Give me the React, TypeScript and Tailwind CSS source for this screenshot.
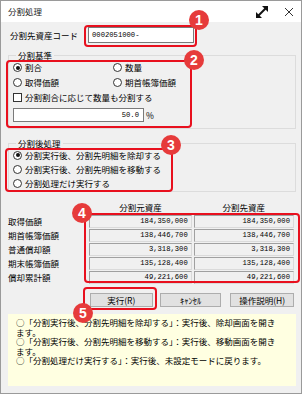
import React from 'react';

const jp = { fontFamily: '"Noto Sans CJK JP", "Noto Sans", sans-serif' };
const mono = { fontFamily: '"Liberation Mono", "Noto Sans CJK JP", monospace' };

function Radio({ checked, label }: { checked?: boolean; label: string }) {
  return (
    <div className="flex items-center gap-[3px]">
      <span className="flex h-[9px] w-[9px] items-center justify-center rounded-full border border-[#333] bg-white">
        {checked && <span className="h-[4px] w-[4px] rounded-full bg-[#111]" />}
      </span>
      <span>{label}</span>
    </div>
  );
}

function Badge({ n, className }: { n: string; className: string }) {
  return (
    <div
      className={`absolute flex h-[20px] w-[20px] items-center justify-center rounded-full bg-[#e63b3b] text-[14px] font-bold leading-none text-white ${className}`}
      style={{ fontFamily: '"Liberation Sans", Arial, sans-serif' }}
    >
      {n}
    </div>
  );
}

const rows = [
  { label: '取得価額', a: '184,350,000', b: '184,350,000' },
  { label: '期首帳簿価額', a: '138,446,700', b: '138,446,700' },
  { label: '普通償却額', a: '3,318,300', b: '3,318,300' },
  { label: '期末帳簿価額', a: '135,128,400', b: '135,128,400' },
  { label: '償却累計額', a: '49,221,600', b: '49,221,600' },
];

export default function App() {
  return (
    <div className="relative h-[396px] w-[304px] overflow-hidden bg-white text-[8.5px] text-black" style={jp}>
      <div className="h-[394px] w-[302px] border border-[#9a9a9a] bg-[#f0f0f0]">
        {/* title bar */}
        <div className="flex h-[21px] items-center bg-white pl-[7px] pr-[7px]">
          <span className="text-[#222]">分割処理</span>
          <svg className="ml-auto" width="14" height="14" viewBox="0 0 14 14">
            <line x1="3" y1="11" x2="11" y2="3" stroke="#111" strokeWidth="2" />
            <polygon points="13,1 13,7 7,1" fill="#111" />
            <polygon points="1,13 1,7 7,13" fill="#111" />
          </svg>
          <svg className="ml-[15px]" width="10" height="10" viewBox="0 0 10 10">
            <path d="M1 1 L9 9 M9 1 L1 9" stroke="#333" strokeWidth="1" />
          </svg>
        </div>

        <div className="px-[7px]">
          <div className="mt-[5px] flex items-center">
            <span className="w-[80px] pl-[2px]">分割先資産コード</span>
            <div className="flex h-[16px] w-[106px] items-center border border-[#7a7a7a] bg-white pl-[3px] text-[7.2px]" style={mono}>
              0002051000-
            </div>
          </div>

          <fieldset className="mt-[8px] w-[288px] border border-[#dcdcdc] px-[4px] pb-[6px] pt-[1px]">
            <legend className="ml-[3px] px-[2px] leading-[8px]">分割基準</legend>
            <div className="grid h-[15px] grid-cols-[100px_1fr] items-center">
              <Radio checked label="割合" />
              <Radio label="数量" />
            </div>
            <div className="grid h-[15px] grid-cols-[100px_1fr] items-center">
              <Radio label="取得価額" />
              <Radio label="期首帳簿価額" />
            </div>
            <div className="flex h-[15px] items-center gap-[3px]">
              <span className="h-[9px] w-[9px] border border-[#333] bg-white" />
              <span>分割割合に応じて数量も分割する</span>
            </div>
            <div className="mt-[3px] flex items-center gap-[2px]">
              <div className="flex h-[14px] w-[131px] items-center justify-end border border-[#7a7a7a] bg-white pr-[4px] text-[7.2px]" style={mono}>
                50.0
              </div>
              <span>%</span>
            </div>
          </fieldset>

          <fieldset className="mt-[10px] w-[288px] border border-[#dcdcdc] px-[4px] pb-[1px] pt-[1px]">
            <legend className="ml-[3px] px-[2px] leading-[8px]">分割後処理</legend>
            <div className="flex h-[14px] items-center"><Radio checked label="分割実行後、分割先明細を除却する" /></div>
            <div className="flex h-[14px] items-center"><Radio label="分割実行後、分割先明細を移動する" /></div>
            <div className="flex h-[14px] items-center"><Radio label="分割処理だけ実行する" /></div>
          </fieldset>

          <div className="mt-[9px] flex h-[12px] items-center">
            <span className="w-[82px]" />
            <span className="w-[103px] text-center">分割元資産</span>
            <span className="ml-[2px] w-[101px] text-center">分割先資産</span>
          </div>
          <div className="mt-[2px] flex flex-col gap-[1px]">
            {rows.map((r) => (
              <div key={r.label} className="flex h-[13px] items-center">
                <span className="w-[82px]">{r.label}</span>
                <div className="flex h-[13px] w-[103px] items-center justify-end border border-[#a0a0a0] border-b-[#dadada] border-r-[#dadada] pr-[3px] text-[7.2px]" style={mono}>
                  {r.a}
                </div>
                <div className="ml-[2px] flex h-[13px] w-[101px] items-center justify-end border border-[#a0a0a0] border-b-[#dadada] border-r-[#dadada] pr-[3px] text-[7.2px]" style={mono}>
                  {r.b}
                </div>
              </div>
            ))}
          </div>

          <div className="mt-[9px] flex h-[14px] items-stretch pl-[82px]">
            <button className="w-[63px] border border-[#adadad] bg-[#e1e1e1] leading-none">実行(R)</button>
            <button className="ml-[7px] w-[62px] border border-[#adadad] bg-[#e1e1e1] leading-none">ｷｬﾝｾﾙ</button>
            <button className="ml-[9px] w-[64px] border border-[#adadad] bg-[#e1e1e1] leading-none">操作説明(H)</button>
          </div>

          <div className="mt-[7px] h-[72px] w-[288px] bg-[#ffffe1] pl-[8px] pt-[4px] leading-[9.5px]">
            <div>○「分割実行後、分割先明細を除却する」：実行後、除却画面を開き</div>
            <div>ます。</div>
            <div>○「分割実行後、分割先明細を移動する」：実行後、移動画面を開き</div>
            <div>ます。</div>
            <div>○「分割処理だけ実行する」：実行後、未設定モードに戻ります。</div>
          </div>
        </div>
      </div>

      {/* annotation overlays */}
      <div className="absolute left-[84px] top-[25px] h-[22px] w-[113px] rounded-[4px] border-[2.5px] border-[#e8101e]" />
      <div className="absolute left-[6px] top-[60px] h-[68px] w-[186px] rounded-[4px] border-[2.5px] border-[#e8101e]" />
      <div className="absolute left-[5px] top-[148px] h-[44px] w-[168px] rounded-[4px] border-[2.5px] border-[#e8101e]" />
      <div className="absolute left-[84px] top-[213px] h-[70px] w-[216px] rounded-[4px] border-[2.5px] border-[#e8101e]" />
      <div className="absolute left-[83px] top-[287px] h-[23px] w-[74px] rounded-[4px] border-[2.5px] border-[#e8101e]" />
      <Badge n="1" className="left-[189px] top-[10px]" />
      <Badge n="2" className="left-[184px] top-[50px]" />
      <Badge n="3" className="left-[161px] top-[135px]" />
      <Badge n="4" className="left-[72px] top-[203px]" />
      <Badge n="5" className="left-[73px] top-[303px]" />
    </div>
  );
}
